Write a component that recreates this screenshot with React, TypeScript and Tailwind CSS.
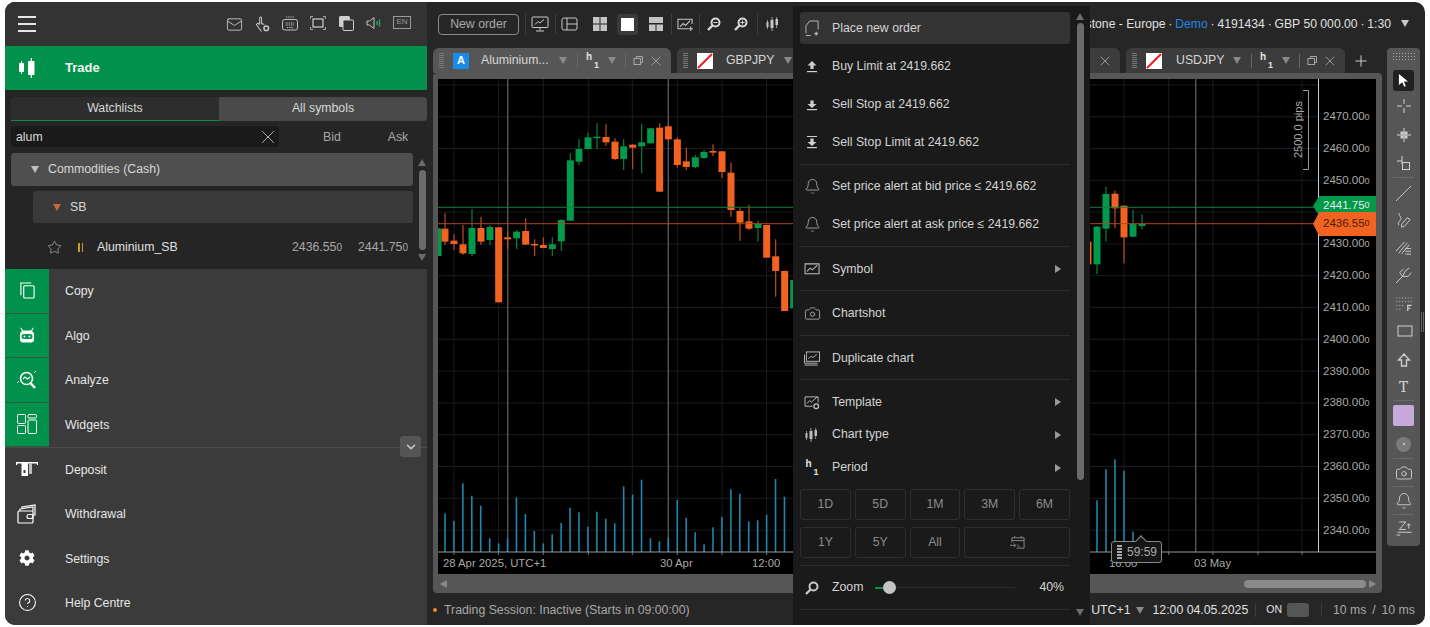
import { Bell, Camera, ChevronDown, CircleHelp, Mail, Plus, Star, X } from "lucide-react";
import { FaCog } from "react-icons/fa";

type Candle = [number, number, number, number, number, "g" | "o"];

// read off the reference: x, wick top, body top, body bottom, wick bottom
const leftCandles: Candle[] = [
  [24, 685, 685, 768, 768, "g"],
  [45, 640, 686, 725, 735, "o"],
  [72, 703, 722, 732, 750, "o"],
  [99, 675, 733, 760, 765, "o"],
  [126, 628, 684, 762, 768, "g"],
  [153, 650, 684, 725, 735, "o"],
  [180, 675, 681, 720, 735, "g"],
  [206, 682, 682, 907, 907, "o"],
  [233, 693, 712, 718, 748, "o"],
  [260, 690, 695, 715, 747, "g"],
  [287, 655, 693, 734, 735, "o"],
  [314, 718, 732, 736, 768, "o"],
  [340, 712, 735, 744, 745, "o"],
  [367, 712, 733, 747, 768, "g"],
  [394, 658, 660, 724, 752, "g"],
  [421, 460, 481, 662, 662, "g"],
  [447, 418, 447, 485, 495, "g"],
  [474, 398, 412, 447, 448, "g"],
  [501, 370, 410, 414, 447, "g"],
  [528, 373, 411, 427, 437, "o"],
  [555, 415, 425, 477, 480, "o"],
  [581, 418, 439, 477, 510, "g"],
  [608, 433, 434, 443, 508, "o"],
  [635, 372, 427, 439, 520, "g"],
  [662, 384, 385, 430, 430, "g"],
  [689, 370, 383, 575, 575, "o"],
  [715, 375, 379, 418, 418, "o"],
  [742, 412, 418, 495, 503, "o"],
  [769, 443, 484, 501, 510, "o"],
  [796, 465, 472, 501, 505, "g"],
  [822, 450, 456, 474, 476, "g"],
  [849, 433, 453, 458, 468, "o"],
  [876, 453, 454, 516, 535, "o"],
  [903, 488, 518, 630, 650, "o"],
  [930, 625, 633, 668, 722, "o"],
  [957, 614, 664, 686, 690, "o"],
  [984, 662, 672, 684, 725, "g"],
  [1010, 675, 675, 773, 773, "o"],
  [1037, 718, 769, 813, 890, "o"],
  [1064, 812, 813, 933, 933, "o"],
  [1091, 840, 840, 925, 925, "g"],
];

const rightCandles: Candle[] = [
  [9, 725, 725, 793, 793, "o"],
  [36, 678, 680, 793, 822, "g"],
  [63, 560, 582, 686, 725, "g"],
  [90, 572, 581, 625, 685, "o"],
  [117, 617, 617, 712, 790, "o"],
  [144, 630, 672, 710, 710, "g"],
  [171, 643, 672, 678, 688, "g"],
];

const leftVolume = [580, 602, 490, 527, 557, 655, 670, 655, 532, 582, 633, 670, 643, 609, 563, 577, 620, 575, 596, 610, 499, 524, 479, 655, 664, 653, 540, 593, 637, 673, 622, 590, 508, 521, 604, 601, 584, 477, 530];
const rightVolume: [number, number][] = [[36, 541], [63, 448], [90, 418], [117, 452], [144, 635]];

const verticalGrid = [454, 498.4, 543.3, 588.3, 632.3, 677.3, 722, 766.7, 811, 856, 900, 945, 990, 1035, 1079, 1124, 1168.7, 1213, 1258, 1302];
const separators = [507.7, 668.3, 1195.7];
const prices = [2470, 2460, 2450, 2440, 2430, 2420, 2410, 2400, 2390, 2380, 2370, 2360, 2350, 2340];

function Candles({ items, toX }: { items: Candle[]; toX: (x: number) => number }) {
  return (
    <>
      {items.map(([x, wt, bt, bb, wb, c]) => {
        const fill = c === "g" ? "#009a4a" : "#f26322";
        const wick = c === "g" ? "#0b7f3e" : "#bb4f1f";
        return (
          <g key={x}>
            <line x1={toX(x)} x2={toX(x)} y1={wt / 3 - 79} y2={wb / 3 - 79} stroke={wick} strokeWidth="1.2" />
            <rect x={toX(x) - 3.5} y={bt / 3 - 79} width="7" height={Math.max(1.5, (bb - bt) / 3)} fill={fill} />
          </g>
        );
      })}
    </>
  );
}

function Chart() {
  const leftX = (x: number) => x / 3 - 8;
  const rightX = (x: number) => x / 3 + 647;
  return (
    <svg width="938" height="495" className="block" fontFamily="Liberation Sans, sans-serif">
      <rect width="938" height="495" fill="#000" />
      {prices.concat(2480).map((p) => {
        const y = 37.7 + ((2470 - p) / 10) * 31.8;
        return <line key={p} x1="0" x2="880" y1={y} y2={y} stroke="#1b1b21" />;
      })}
      {verticalGrid.map((x) => (
        <line key={x} x1={x - 438} x2={x - 438} y1="0" y2="473" stroke="#1b1b21" />
      ))}
      {separators.map((x) => (
        <line key={x} x1={x - 438} x2={x - 438} y1="0" y2="473" stroke="#565656" strokeWidth="1.4" />
      ))}
      <Candles items={leftCandles} toX={leftX} />
      <Candles items={rightCandles} toX={rightX} />
      <line x1="0" x2="880" y1="128.3" y2="128.3" stroke="#0d7f3e" />
      <line x1="0" x2="880" y1="144.7" y2="144.7" stroke="#b3471d" />
      {leftVolume.map((top, i) => {
        const x = leftX(45 + i * 26.8);
        return <line key={i} x1={x} x2={x} y1={top / 3 + 241} y2="473" stroke="#1f86ad" strokeWidth="1.6" />;
      })}
      {rightVolume.map(([x, top]) => (
        <line key={x} x1={rightX(x)} x2={rightX(x)} y1={top / 3 + 241} y2="473" stroke="#1f86ad" strokeWidth="1.6" />
      ))}
      <line x1="880.5" x2="880.5" y1="0" y2="473" stroke="#cfcfcf" />
      <line x1="0" x2="938" y1="473" y2="473" stroke="#9a9a9a" />
      {verticalGrid.map((x) => (
        <line key={x} x1={x - 438} x2={x - 438} y1="473" y2="476" stroke="#777" />
      ))}
      {prices.map((p) => {
        const y = 37.7 + ((2470 - p) / 10) * 31.8;
        if (p === 2440) return null;
        return (
          <text key={p} x="885" y={y + 3.5} fontSize="11.5" fill="#a8a8a8">
            {p}.00<tspan fontSize="9">0</tspan>
          </text>
        );
      })}
      <text x="5" y="488" fontSize="11.3" fill="#a8a8a8">28 Apr 2025, UTC+1</text>
      <text x="222" y="488" fontSize="11.3" fill="#a8a8a8">30 Apr</text>
      <text x="314" y="488" fontSize="11.3" fill="#a8a8a8">12:00</text>
      <text x="671" y="488" fontSize="11.3" fill="#a8a8a8">16:00</text>
      <text x="756" y="488" fontSize="11.3" fill="#a8a8a8">03 May</text>
      <text transform="translate(864 79) rotate(-90)" fontSize="11" fill="#a8a8a8">2500.0 pips</text>
      <path d="M865 11.5h5.5v79h-5.5" fill="none" stroke="#9a9a9a" />
    </svg>
  );
}

function CandleGlyph({ className }: { className?: string }) {
  return (
    <svg viewBox="0 0 16 16" className={className} fill="currentColor">
      <rect x="1.5" y="6" width="2" height="5" />
      <rect x="2.200" y="4" width=".7" height="9" />
      <rect x="5.500" y="4" width="3" height="8" />
      <rect x="6.600" y="1" width=".8" height="14" />
      <rect x="10.500" y="3" width="2.500" height="6" />
      <rect x="11.400" y="1" width=".7" height="11" />
    </svg>
  );
}

function TradeGlyph() {
  return (
    <svg viewBox="0 0 18 20" className="h-[20px] w-[18px]" fill="#fff">
      <rect x="1" y="5" width="5" height="9" rx="1" />
      <rect x="3" y="3" width="1" height="13" />
      <rect x="10" y="3" width="6.500" height="14" rx="1" />
      <rect x="12.700" y="0" width="1.200" height="20" />
    </svg>
  );
}

function ChartBoxIcon({ className, plus }: { className?: string; plus?: boolean }) {
  return (
    <svg viewBox="0 0 18 15" className={className} fill="none" stroke="currentColor" strokeWidth="1.1">
      <path d={plus ? "M12 12H1V2h15v5" : "M1 2h15v10.500H1z"} />
      <path d="M3 10l3.500-3.500 2.500 2L14 3.500" />
      {plus && <path d="M14.500 9.500v5M12 12h5" />}
    </svg>
  );
}

function PeriodGlyph() {
  return (
    <span className="flex w-[13px] items-start text-[10px] font-bold leading-[9px] text-[#e2e2e2]">
      <span>h</span>
      <span className="ml-[2px] mt-[9px] text-[9px]">1</span>
    </span>
  );
}

function Tri({ className }: { className?: string }) {
  return <span className={`h-0 w-0 shrink-0 border-x-[4px] border-t-[7px] border-x-transparent border-t-[#8a8a8a] ${className ?? ""}`} />;
}

function Flag() {
  return (
    <svg viewBox="0 0 16 16" className="h-[16px] w-[16px]">
      <rect width="16" height="16" fill="#fff" />
      <line x1="1" y1="15" x2="15" y2="1" stroke="#ee1c25" strokeWidth="2" />
    </svg>
  );
}

function Tab({ name, active, nameWidth, nameGap, icon }: { name: string; active?: boolean; nameWidth: string; nameGap: string; icon: React.ReactNode }) {
  return (
    <div className={`flex h-[25px] shrink-0 items-center rounded-t-[6px] pl-[6px] pr-[7px] ${active ? "bg-[#565656]" : "bg-[#3c3c3c]"}`}>
      <span className="h-[15px] w-[5px] bg-[repeating-linear-gradient(0deg,#777_0,#777_1px,transparent_1px,transparent_2px)]" />
      <span className="ml-[9px] w-[16px]">{icon}</span>
      <span className={`truncate text-[12.3px] text-[#d6d6d6] ${nameGap} ${nameWidth}`}>{name}</span>
      <Tri />
      <span className="ml-[10px] h-[14px] w-px bg-[#666]" />
      <span className="ml-[8px]"><PeriodGlyph /></span>
      <Tri className="ml-[9px]" />
      <span className="ml-[9px] h-[14px] w-px bg-[#666]" />
      <svg viewBox="0 0 11 11" className="ml-[7px] h-[11px] w-[11px]" fill="none" stroke="#a5a5a5">
        <rect x="1" y="3.5" width="6.5" height="6" />
        <path d="M3.5 3.5V1.5h6v6H7.5" />
      </svg>
      <X size={16} strokeWidth={1.3} className="ml-[4px] text-[#a5a5a5]" />
    </div>
  );
}

// the tab behind the context menu: only its end sticks out
function CoveredTab() {
  return (
    <div className="flex h-[25px] w-[218px] shrink-0 items-center justify-end rounded-t-[6px] bg-[#3c3c3c] pr-[7px]">
      <X size={16} strokeWidth={1.3} className="text-[#a5a5a5]" />
    </div>
  );
}

function MenuRow({ icon, label, height, arrow, active }: { icon: React.ReactNode; label: string; height: string; arrow?: boolean; active?: boolean }) {
  return (
    <div className={`flex shrink-0 items-center rounded-[3px] text-[12.3px] text-[#d4d4d4] ${height} ${active ? "bg-[#333333]" : ""}`}>
      <span className="flex w-[32px] justify-center pr-[8px] text-[#bdbdbd]">{icon}</span>
      <span>{label}</span>
      {arrow && <span className="ml-auto mr-[9px] h-0 w-0 border-y-[4px] border-l-[6px] border-y-transparent border-l-[#9a9a9a]" />}
    </div>
  );
}

function OrderIcon({ kind }: { kind: "up" | "down" | "downLimit" }) {
  return (
    <svg viewBox="0 0 14 16" className="h-[16px] w-[14px]" fill="#d0d0d0">
      {kind === "downLimit" && <rect x="2" y="2" width="10" height="1" />}
      {kind === "up" ? <path d="M7 3l4.5 4.5H8.6V11H5.4V7.5H2.5z" /> : <path d="M5.4 4.5h3.2V8h2.9L7 12 2.5 8h2.9z" />}
      <rect x="2" y="13" width="10" height="1.2" />
    </svg>
  );
}

function Sep({ className }: { className?: string }) {
  return <div className={`h-px shrink-0 bg-[#2c2c2c] ${className ?? ""}`} />;
}

function ToolSep() {
  return <div className="mx-auto h-px w-[21px] shrink-0 bg-[#6a6a6a]" />;
}

function Tool({ h, children }: { h: string; children: React.ReactNode }) {
  return <div className={`flex shrink-0 items-center justify-center text-[#d0d0d0] ${h}`}>{children}</div>;
}

function Dot() {
  return <span className="mx-[2.8px]">·</span>;
}

const navRows = [
  {
    label: "Copy",
    icon: (
      <svg viewBox="0 0 18 20" className="h-[19px] w-[17px]" fill="none" stroke="#fff" strokeWidth="1.2">
        <path d="M2 15V2h11" />
        <rect x="5" y="5" width="11" height="13" rx="1" />
      </svg>
    ),
  },
  {
    label: "Algo",
    icon: (
      <svg viewBox="0 0 18 16" className="h-[16px] w-[18px]" fill="#fff">
        <path d="M3 0.5l2 3h8l2-3 .6.4L14 4.2c1.2.5 2 1.6 2 2.8v6c0 1.6-1.3 2.5-3 2.5H5c-1.7 0-3-.9-3-2.5V7c0-1.2.8-2.3 2-2.8L2.400.9z" />
        <rect x="3.500" y="7" width="11" height="5" rx="2.500" fill="#00924a" />
        <circle cx="6.500" cy="9.500" r="1" />
        <circle cx="11.500" cy="9.500" r="1" />
      </svg>
    ),
  },
  {
    label: "Analyze",
    icon: (
      <svg viewBox="0 0 22 20" className="h-[20px] w-[22px]" fill="none" stroke="#fff" strokeWidth="1.6">
        <circle cx="10.500" cy="8.500" r="6" />
        <path d="M14.500 13l4.500 5" strokeWidth="2.400" />
        <path d="M7 9l2-2 2.500 2L14 7" strokeWidth="1.100" />
        <path d="M1 13l2-2M18 3l2-2" strokeWidth="1" />
      </svg>
    ),
  },
  {
    label: "Widgets",
    icon: (
      <svg viewBox="0 0 20 20" className="h-[20px] w-[20px]" fill="none" stroke="#fff" strokeWidth="1">
        <rect x="0.500" y="0.500" width="8" height="9" rx="1" />
        <rect x="11" y="0.500" width="8.500" height="3.500" rx="1" />
        <rect x="0.500" y="11.500" width="8" height="8" rx="1" />
        <rect x="11" y="6" width="8.500" height="13.500" rx="1" />
      </svg>
    ),
  },
  {
    label: "Deposit",
    icon: (
      <svg viewBox="0 0 22 16" className="h-[16px] w-[22px]" fill="#fff">
        <path d="M0 1h22v3h-1.200V2.500H1.200V4H0z" />
        <rect x="5.500" y="2" width="6.500" height="13" />
        <rect x="7.500" y="9" width="2" height="3" fill="#3b3b3b" />
        <rect x="13" y="2" width="3" height="11" fill="#bdbdbd" />
      </svg>
    ),
  },
  {
    label: "Withdrawal",
    icon: (
      <svg viewBox="0 0 20 20" className="h-[20px] w-[20px]" fill="none" stroke="#fff" strokeWidth="1.2">
        <rect x="1" y="7" width="15" height="12" rx="1" />
        <path d="M3 7V5l13-2v4M5 5V3l13-2v10h-2" />
        <rect x="10" y="10.500" width="6" height="4" rx="2" />
      </svg>
    ),
  },
  { label: "Settings", icon: <FaCog size={16} color="#fff" /> },
  { label: "Help Centre", icon: <CircleHelp size={19} strokeWidth={1.3} color="#fff" /> },
];

export default function App() {
  return (
    <div className="h-[627px] w-[1430px] overflow-hidden bg-white px-[5px] pb-[2px] pt-[2px] font-['Liberation_Sans',sans-serif]">
      <div className="flex h-full overflow-hidden rounded-[10px] bg-[#262626]">
        <aside className="relative flex w-[422px] shrink-0 flex-col bg-[#3b3b3b]">
          <header className="flex h-[44px] shrink-0 items-center justify-between bg-[#333333] pl-[13px] pr-[11px]">
            <div className="flex w-[18px] flex-col gap-[5px]">
              <span className="h-[2px] bg-[#e6e6e6]" />
              <span className="h-[2px] bg-[#e6e6e6]" />
              <span className="h-[2px] bg-[#e6e6e6]" />
            </div>
            <div className="flex text-[#c4c4c4]">
              <span className="flex w-[28px] justify-center"><Mail size={17} strokeWidth={1.3} /></span>
              <span className="flex w-[28px] justify-center">
                <svg viewBox="0 0 16 18" className="h-[17px] w-[15px]" fill="none" stroke="currentColor" strokeWidth="1.100">
                  <path d="M5 9V2a1 1 0 012 0v6l3 1M5 9L3 7.500 1.500 9 5 14l2 2.500" />
                  <circle cx="12" cy="13" r="2.500" strokeWidth="1.600" />
                </svg>
              </span>
              <span className="flex w-[28px] justify-center">
                <svg viewBox="0 0 16 15" className="h-[15px] w-[16px]" fill="none" stroke="currentColor">
                  <rect x="0.500" y="3.500" width="15" height="10.500" rx="2" />
                  <path d="M4 1h8M3.500 7h9M3.500 9h9M5 11.500h6" strokeDasharray="1 .8" />
                </svg>
              </span>
              <span className="flex w-[28px] justify-center">
                <svg viewBox="0 0 16 14" className="h-[14px] w-[16px]" fill="none" stroke="currentColor">
                  <rect x="3" y="3" width="10" height="8" strokeWidth="1.300" />
                  <path d="M.5 3V.5H3M13 .5h2.500V3M.5 11v2.500H3M13 13.500h2.500V11" strokeWidth=".8" />
                </svg>
              </span>
              <span className="flex w-[28px] justify-center">
                <svg viewBox="0 0 15 15" className="h-[15px] w-[15px]">
                  <rect x="0" y="0" width="11" height="11" rx="1.500" fill="#d0d0d0" />
                  <rect x="4" y="4" width="10.500" height="10.500" rx="1" fill="#333" stroke="#d0d0d0" />
                </svg>
              </span>
              <span className="flex w-[28px] justify-center">
                <svg viewBox="0 0 16 14" className="h-[14px] w-[16px]" fill="none" stroke="currentColor">
                  <path d="M1 5v4h2.500L8 12.500v-11L3.500 5z" />
                  <path d="M11 5v4M13.500 3.500v7" stroke="#1fa35b" strokeWidth="1.500" />
                </svg>
              </span>
              <span className="flex w-[28px] justify-center">
                <span className="flex h-[13px] w-[18px] items-center justify-center border border-[#9a9a9a] text-[8px] leading-none text-[#9a9a9a]">EN</span>
              </span>
            </div>
          </header>

          <div className="flex h-[44px] shrink-0 items-center bg-[#00924a] text-[13px] font-bold text-[#f2f2f2]">
            <span className="flex w-[44px] justify-center"><TradeGlyph /></span>
            <span className="ml-[16px]">Trade</span>
          </div>

          <section className="h-[179px] shrink-0 bg-[#252525] pl-[6px] pt-[7px] text-[12.3px]">
            <div className="flex h-[24px] text-[#d8d8d8]">
              <div className="flex w-[208px] items-center justify-center rounded-tl-[4px] border-b border-[#0d8a47] bg-[#2d2d2d] pb-[1px]">Watchlists</div>
              <div className="flex flex-1 items-center justify-center rounded-r-[4px] bg-[#4a4a4a] pb-[1px]">All symbols</div>
            </div>
            <div className="mt-[5px] flex h-[21px] items-center text-[#a5a5a5]">
              <div className="flex h-full w-[268px] items-center justify-between rounded-[3px] bg-[#1a1a1a] pl-[5px] text-[#d8d8d8]">
                <span className="pt-[1px]">alum</span>
                <X size={22} strokeWidth={1} className="text-[#bdbdbd]" />
              </div>
              <span className="w-[106px] pt-[1px] text-center">Bid</span>
              <span className="w-[26px] pt-[1px] text-center">Ask</span>
            </div>
            <div className="mt-[6px] flex">
              <div className="w-[402px]">
                <div className="flex h-[33px] items-center rounded-[3px] bg-[#4f4f4f] pl-[20px] text-[#d8d8d8]">
                  <Tri className="border-t-[#c0c0c0]" />
                  <span className="ml-[9px]">Commodities (Cash)</span>
                </div>
                <div className="ml-[22px] mt-[5px] flex h-[32px] items-center rounded-[3px] bg-[#3a3a3a] pl-[20px] text-[#d8d8d8]">
                  <Tri className="border-t-[#c96a3a]" />
                  <span className="ml-[9px]">SB</span>
                </div>
                <div className="flex h-[47px] items-center pt-[2px] text-[#a8a8a8]">
                  <Star size={15} strokeWidth={1} className="ml-[36px] text-[#c8c8c8]" />
                  <span className="ml-[16px] flex gap-[2px]">
                    <span className="h-[9px] w-[1.5px] bg-[#c79a2c]" />
                    <span className="h-[9px] w-[1.5px] bg-[#c79a2c]" />
                  </span>
                  <span className="ml-[14px] text-[#e0e0e0]">Aluminium_SB</span>
                  <span className="ml-auto">2436.55<span className="text-[10px]">0</span></span>
                  <span className="ml-[16px] mr-[5px]">2441.75<span className="text-[10px]">0</span></span>
                </div>
              </div>
              <div className="ml-[4px] flex w-[10px] flex-col items-center pt-[6px]">
                <span className="h-0 w-0 border-x-[4px] border-b-[7px] border-x-transparent border-b-[#6b6b6b]" />
                <span className="mt-[4px] h-[80px] w-[7px] rounded-full bg-[#6b6b6b]" />
                <span className="mt-[4px] h-0 w-0 border-x-[4px] border-t-[7px] border-x-transparent border-t-[#6b6b6b]" />
              </div>
            </div>
          </section>

          <nav className="flex flex-1 flex-col text-[12.3px] text-[#e6e6e6]">
            {navRows.map((row, i) => (
              <div key={row.label} className="flex h-[44.5px] items-center">
                <span className={`flex h-full w-[44px] items-center justify-center ${i < 4 ? "border-b border-[#2e5a41] bg-[#00924a]" : ""}`}>{row.icon}</span>
                <span className={`ml-[16px] ${i < 4 ? "" : "pt-[1px]"}`}>{row.label}</span>
              </div>
            ))}
          </nav>
          <div className="absolute left-0 top-[445px] h-px w-full bg-[#4a4a4a]" />
          <span className="absolute left-[395px] top-[434px] flex h-[21px] w-[21px] items-center justify-center rounded-[3px] bg-[#555555] text-[#cfcfcf]">
            <ChevronDown size={14} strokeWidth={2.500} />
          </span>
        </aside>

        <main className="relative flex min-w-0 flex-1 flex-col">
          <div className="flex h-[44px] shrink-0 items-center pl-[11px] text-[#c8c8c8]">
            <span className="flex h-[21px] w-[81px] shrink-0 items-center justify-center rounded-[4px] border border-[#8a8a8a] text-[12.3px] text-[#a8a8a8]">New order</span>
            <span className="ml-[6px] h-[20px] w-px shrink-0 bg-[#3d3d3d]" />
            <svg viewBox="0 0 18 16" className="ml-[5px] h-[16px] w-[18px] shrink-0" fill="none" stroke="currentColor">
              <rect x="1" y="1" width="16" height="10.500" rx="1" />
              <path d="M4 8.500l3-3 2 1.500 4-3.500M9 11.500v3M5 15h8" />
            </svg>
            <span className="ml-[6px] h-[20px] w-px shrink-0 bg-[#3d3d3d]" />
            <svg viewBox="0 0 18 14" className="ml-[5px] h-[14px] w-[18px] shrink-0" fill="none" stroke="currentColor">
              <rect x="1" y="1" width="15" height="12" rx="2" />
              <path d="M6 1v12M6 7h10" />
            </svg>
            <svg viewBox="0 0 14 14" className="ml-[14px] h-[14px] w-[14px] shrink-0" fill="#c4c4c4">
              <rect width="6.500" height="6.500" /><rect x="7.500" width="6.500" height="6.500" />
              <rect y="7.500" width="6.500" height="6.500" /><rect x="7.500" y="7.500" width="6.500" height="6.500" />
            </svg>
            <span className="ml-[10px] flex h-[21px] w-[21px] shrink-0 items-center justify-center rounded-[3px] bg-[#3a3a3a]">
              <span className="h-[13px] w-[13px] bg-white" />
            </span>
            <svg viewBox="0 0 14 14" className="ml-[11px] h-[14px] w-[14px] shrink-0" fill="#c4c4c4">
              <rect width="14" height="6" /><rect y="7.500" width="6.500" height="6.500" /><rect x="7.500" y="7.500" width="6.500" height="6.500" />
            </svg>
            <span className="ml-[8px] h-[20px] w-px shrink-0 bg-[#3d3d3d]" />
            <span className="ml-[5px] w-[17px] shrink-0"><ChartBoxIcon plus className="h-[15px] w-[17px]" /></span>
            <span className="ml-[5px] h-[20px] w-px shrink-0 bg-[#3d3d3d]" />
            <svg viewBox="0 0 14 14" className="ml-[7px] h-[14px] w-[14px] shrink-0" fill="none" stroke="#d8d8d8">
              <circle cx="8.500" cy="5.500" r="4" strokeWidth="2" /><path d="M5.500 8.500L1 13" strokeWidth="2.400" /><path d="M6.500 5.500h4" />
            </svg>
            <svg viewBox="0 0 14 14" className="ml-[13px] h-[14px] w-[14px] shrink-0" fill="none" stroke="#d8d8d8">
              <circle cx="8.500" cy="5.500" r="4" strokeWidth="2" /><path d="M5.500 8.500L1 13" strokeWidth="2.400" /><path d="M6.500 5.500h4M8.500 3.500v4" />
            </svg>
            <span className="ml-[9px] h-[20px] w-px shrink-0 bg-[#3d3d3d]" />
            <CandleGlyph className="ml-[7px] h-[16px] w-[16px] shrink-0 text-[#c8c8c8]" />
            <div className="ml-auto flex shrink-0 items-center pr-[16px] text-[12.2px] text-[#e0e0e0]">
              <span>
                stone - Europe<Dot /><span className="text-[#1e88e5]">Demo</span><Dot />4191434<Dot />GBP 50 000.00<Dot />1:30
              </span>
              <Tri className="ml-[10px] border-t-[#c8c8c8]" />
            </div>
          </div>

          <div className="flex h-[549px] shrink-0">
            <div className="ml-[6px] w-[949px] shrink-0">
              <div className="flex h-[27px] gap-[6px] pt-[2px]">
                <Tab
                  active
                  name="Aluminium..."
                  nameGap="ml-[12px]"
                  nameWidth="w-[78px]"
                  icon={<span className="flex h-[16px] w-[16px] items-center justify-center bg-[#1a8be8] text-[11px] font-bold text-white">A</span>}
                />
                <Tab name="GBPJPY" nameGap="ml-[13px]" nameWidth="w-[58px]" icon={<Flag />} />
                <CoveredTab />
                <Tab name="USDJPY" nameGap="ml-[14px]" nameWidth="w-[57px]" icon={<Flag />} />
                <Plus size={18} strokeWidth={1.3} className="ml-[1px] mt-[4px] text-[#d0d0d0]" />
              </div>
              <div className="h-[520px] rounded-[4px] bg-[#565656] pl-[5px] pr-[6px] pt-[6px]">
                <div className="relative h-[495px]">
                  <Chart />
                  <span className="absolute left-[875px] top-[117px] flex h-[20px] w-[63px] items-center bg-[#009a4a] pl-[10px] text-[11.500px] text-[#e8e8e8] [clip-path:polygon(10%_0,100%_0,100%_100%,10%_100%,0_50%)]">
                    2441.75<span className="text-[9px]">0</span>
                  </span>
                  <span className="absolute left-[875px] top-[133px] flex h-[24px] w-[63px] items-center bg-[#f26322] pl-[10px] text-[11.500px] text-[#4a1c08] [clip-path:polygon(10%_0,100%_0,100%_100%,10%_100%,0_50%)]">
                    2436.55<span className="text-[9px]">0</span>
                  </span>
                  <span className="absolute left-[673px] top-[462px] flex h-[22px] w-[51px] items-center rounded-[3px] border border-[#8a8a8a] bg-[#151515] pl-[5px] text-[12px] text-[#a8a8a8]">
                    <span className="h-[14px] w-[5px] bg-[repeating-linear-gradient(0deg,#aaa_0,#aaa_2px,transparent_2px,transparent_3px)]" />
                    <span className="ml-[5px]">59:59</span>
                  </span>
                  <span className="absolute left-[699px] top-[458px] h-[8px] w-[8px] rotate-45 border-l border-t border-[#8a8a8a] bg-[#151515]" />
                </div>
                <div className="flex h-[19px] items-center justify-between">
                  <span className="ml-[2px] h-0 w-0 border-y-[4px] border-r-[7px] border-y-transparent border-r-[#8a8a8a]" />
                  <div className="flex items-center">
                    <span className="h-[8px] w-[122px] rounded-full bg-[#8a8a8a]" />
                    <span className="ml-[3px] h-0 w-0 border-y-[4px] border-l-[7px] border-y-transparent border-l-[#8a8a8a]" />
                  </div>
                </div>
              </div>
            </div>

            <div className="ml-[5px] mt-[2px] flex h-[498px] w-[33px] shrink-0 flex-col rounded-[4px] bg-[#565656] pt-[4px]">
              <div className="mx-auto h-[10px] w-[23px] shrink-0 bg-[radial-gradient(#aaa_0.6px,transparent_0.8px)] bg-[length:3px_3px]" />
              <div className="mx-auto mt-[8px] flex h-[21px] w-[21px] shrink-0 items-center justify-center rounded-[3px] bg-[#202020]">
                <svg viewBox="0 0 12 14" className="h-[13px] w-[11px]" fill="#fff"><path d="M1 0l10 8H6.500l2 5-1.800.8-2-5L1 12z" /></svg>
              </div>
              <Tool h="h-[29px]">
                <svg viewBox="0 0 14 14" className="h-[14px] w-[14px]" stroke="currentColor"><path d="M7 0v5M7 9v5M0 7h5M9 7h5" /></svg>
              </Tool>
              <Tool h="h-[29px]">
                <svg viewBox="0 0 16 16" className="h-[16px] w-[16px]" stroke="currentColor" fill="currentColor"><path d="M8 1v14M1 8h14" strokeWidth="1" /><rect x="5" y="5" width="2" height="2" /><rect x="9" y="9" width="2" height="2" /><rect x="9" y="5" width="2" height="2" /><rect x="5" y="9" width="2" height="2" /></svg>
              </Tool>
              <Tool h="h-[27px] mb-[1px]">
                <svg viewBox="0 0 14 14" className="h-[14px] w-[14px]" fill="none" stroke="currentColor"><path d="M5 0v8M0 5h5" /><rect x="5.500" y="6.500" width="7" height="7" /></svg>
              </Tool>
              <ToolSep />
              <Tool h="h-[28px] mt-[1px]">
                <svg viewBox="0 0 18 18" className="h-[17px] w-[17px]" stroke="currentColor"><path d="M1 17L17 1" /></svg>
              </Tool>
              <Tool h="h-[27px]">
                <svg viewBox="0 0 18 18" className="h-[17px] w-[17px]" fill="none" stroke="currentColor"><path d="M5 1c-3 2 3 4 1 7s-3 3-2 6" /><path d="M7 13l6-7 3 2-6 7-3 1z" /></svg>
              </Tool>
              <Tool h="h-[27px]">
                <svg viewBox="0 0 18 18" className="h-[17px] w-[17px]" fill="none" stroke="currentColor"><path d="M1 13L10 3M4 15l9-11M7 16l8-10M11 10h6M11 13h6M11 16h6" /></svg>
              </Tool>
              <Tool h="h-[28px]">
                <svg viewBox="0 0 18 18" className="h-[17px] w-[17px]" fill="none" stroke="currentColor"><path d="M1 17l7-7M8 10L5 6M8 10l3-6M8 10l6 0M5 6l4-4M11 4l4-3M14 10l3-4" /></svg>
              </Tool>
              <Tool h="h-[28px] mt-[1px]">
                <svg viewBox="0 0 18 16" className="h-[15px] w-[18px]" fill="none" stroke="currentColor">
                  <path d="M1 1h16M1 5h16M1 9h9M1 13h5" strokeDasharray="1 2" />
                  <path d="M13 15V9h4M13 12h3" strokeWidth="1.300" />
                </svg>
              </Tool>
              <Tool h="h-[28px]">
                <svg viewBox="0 0 18 14" className="h-[14px] w-[18px]" fill="none" stroke="currentColor"><rect x="3" y="1" width="14" height="10" /></svg>
              </Tool>
              <Tool h="h-[28px]">
                <svg viewBox="0 0 14 14" className="h-[14px] w-[14px]" fill="none" stroke="currentColor" strokeWidth="1.300"><path d="M7 1l5.500 6H9.500v6h-5V7H1.500z" /></svg>
              </Tool>
              <Tool h="h-[26px] text-[17px] font-serif">T</Tool>
              <ToolSep />
              <div className="mx-auto mt-[4px] h-[21px] w-[21px] shrink-0 rounded-[2px] bg-[#c8a9dc]" />
              <Tool h="h-[22px] mt-[7px]">
                <span className="flex h-[15px] w-[15px] items-center justify-center rounded-full bg-[#7a7a7a]"><span className="h-[2px] w-[2px] rounded-full bg-[#ddd]" /></span>
              </Tool>
              <div className="mt-[3px]"><ToolSep /></div>
              <Tool h="h-[27px]"><Camera size={18} strokeWidth={1.2} /></Tool>
              <ToolSep />
              <Tool h="h-[27px]"><Bell size={18} strokeWidth={1.2} /></Tool>
              <ToolSep />
              <Tool h="h-[26px]">
                <svg viewBox="0 0 18 16" className="h-[15px] w-[18px]" fill="none" stroke="currentColor"><path d="M4 1h7L4 9h7M14 8V3M12 5l2-2 2 2M2 12h15M1 15h4" /></svg>
              </Tool>
            </div>
          </div>

          <footer className="relative flex h-[32px] flex-1 items-center text-[12.3px] text-[#a8a8a8]">
            <span className="ml-[6px] h-[4px] w-[4px] rounded-full bg-[#f08a24]" />
            <span className="ml-[7px]">Trading Session: Inactive (Starts in 09:00:00)</span>
            <div className="ml-auto flex items-center pr-[10px]">
              <span className="text-[#e0e0e0]">UTC+1</span>
              <Tri className="ml-[5px]" />
              <span className="ml-[9px] text-[#e0e0e0]">12:00 04.05.2025</span>
              <span className="ml-[7px] h-[14px] w-px bg-[#3d3d3d]" />
              <span className="ml-[10px] text-[10.500px] text-[#e0e0e0]">ON</span>
              <span className="ml-[5px] h-[14px] w-[22px] rounded-[3px] bg-[#555555]" />
              <span className="ml-[12px] h-[14px] w-px bg-[#3d3d3d]" />
              <span className="ml-[11px]">10 ms<span className="mx-[5.8px]">/</span>10 ms</span>
            </div>
          </footer>

          <div className="absolute right-[1px] top-[310px] flex gap-[1px]">
            <span className="h-[20px] w-px bg-[#666]" />
            <span className="h-[20px] w-px bg-[#666]" />
          </div>

          <div className="absolute bottom-0 left-[366px] top-[4px] z-20 flex w-[297px] bg-[#1a1a1a] pl-[7px] pt-[6px]">
            <div className="flex w-[270px] shrink-0 flex-col">
              <MenuRow
                active
                height="h-[32px]"
                label="Place new order"
                icon={
                  <svg viewBox="0 0 16 18" className="h-[17px] w-[15px]" fill="none" stroke="currentColor">
                    <path d="M1 14V6l4-5h9v9M1 16.500h5" />
                    <path d="M12 12.500v4M10 14.500h4" strokeWidth="1.300" />
                  </svg>
                }
              />
              <div className="h-[3px] shrink-0" />
              <MenuRow height="h-[38px]" label="Buy Limit at 2419.662" icon={<OrderIcon kind="up" />} />
              <MenuRow height="h-[38px]" label="Sell Stop at 2419.662" icon={<OrderIcon kind="down" />} />
              <MenuRow height="h-[38px]" label="Sell Stop Limit at 2419.662" icon={<OrderIcon kind="downLimit" />} />
              <Sep className="mt-[3px]" />
              <div className="h-[2px] shrink-0" />
              <MenuRow height="h-[38px]" label="Set price alert at bid price ≤ 2419.662" icon={<Bell size={17} strokeWidth={1.1} />} />
              <MenuRow height="h-[38px]" label="Set price alert at ask price ≤ 2419.662" icon={<Bell size={17} strokeWidth={1.1} />} />
              <Sep className="mt-[3px]" />
              <MenuRow arrow height="h-[43px] pt-[1px]" label="Symbol" icon={<ChartBoxIcon className="h-[14px] w-[17px]" />} />
              <Sep />
              <MenuRow height="h-[44px]" label="Chartshot" icon={<Camera size={17} strokeWidth={1.1} />} />
              <Sep />
              <MenuRow
                height="h-[43px] pt-[1px]"
                label="Duplicate chart"
                icon={
                  <svg viewBox="0 0 18 16" className="h-[15px] w-[18px]" fill="none" stroke="currentColor">
                    <rect x="3" y="1" width="14" height="10" />
                    <path d="M5 8.500l3-3 2 1.500 4-3.500M1 4v9h14M1 15h14" />
                  </svg>
                }
              />
              <Sep />
              <div className="h-[6px] shrink-0" />
              <MenuRow
                arrow
                height="h-[32px]"
                label="Template"
                icon={
                  <svg viewBox="0 0 18 16" className="h-[15px] w-[17px]" fill="none" stroke="currentColor">
                    <path d="M9 12H1V2h14v6M3 9l3-3 2 1.500L14 2" />
                    <circle cx="13" cy="12" r="2.500" strokeWidth="1.400" />
                  </svg>
                }
              />
              <MenuRow arrow height="h-[33px]" label="Chart type" icon={<CandleGlyph className="h-[16px] w-[16px]" />} />
              <MenuRow arrow height="h-[33px]" label="Period" icon={<PeriodGlyph />} />
              <div className="mt-[5px] grid shrink-0 grid-cols-5 gap-x-[4px] gap-y-[7px] text-[12.3px] text-[#8c8c8c]">
                {["1D", "5D", "1M", "3M", "6M", "1Y", "5Y", "All"].map((p) => (
                  <span key={p} className="flex h-[31px] items-center justify-center rounded-[3px] border border-[#2e2e2e]">{p}</span>
                ))}
                <span className="col-span-2 flex h-[31px] items-center justify-center rounded-[3px] border border-[#2e2e2e]">
                  <svg viewBox="0 0 18 16" className="h-[15px] w-[17px]" fill="none" stroke="currentColor">
                    <path d="M3 8V3h13v11H8M3 6h13M6 1v2M13 1v2" />
                    <path d="M1 11h6M5 9l2 2-2 2M9 10l2 3" />
                  </svg>
                </span>
              </div>
              <Sep className="mt-[7px]" />
              <div className="flex h-[43px] shrink-0 items-center text-[12.3px] text-[#d4d4d4]">
                <span className="flex w-[32px] justify-center pr-[8px]">
                  <svg viewBox="0 0 14 14" className="h-[14px] w-[14px]" fill="none" stroke="#c8c8c8">
                    <circle cx="8.500" cy="5.500" r="4" strokeWidth="2" /><path d="M5.500 8.500L1 13" strokeWidth="2.400" />
                  </svg>
                </span>
                <span className="w-[32px]">Zoom</span>
                <div className="relative ml-[11px] h-[1px] w-[140px] bg-[#2e2e2e]">
                  <span className="absolute left-0 top-[-0.5px] h-[2px] w-[10px] bg-[#0d8a47]" />
                  <span className="absolute left-[8px] top-[-6px] h-[13px] w-[13px] rounded-full bg-[#c4c4c4]" />
                </div>
                <span className="ml-auto mr-[6px]">40%</span>
              </div>
              <Sep />
            </div>
            <div className="ml-[6px] flex w-[8px] shrink-0 flex-col items-center pb-[9px] pt-[1px]">
              <span className="h-0 w-0 border-x-[4px] border-b-[7px] border-x-transparent border-b-[#6b6b6b]" />
              <span className="mt-[3px] h-[457px] w-[7px] rounded-full bg-[#6b6b6b]" />
              <span className="mt-auto h-0 w-0 border-x-[4px] border-t-[7px] border-x-transparent border-t-[#6b6b6b]" />
            </div>
          </div>
        </main>
      </div>
    </div>
  );
}
